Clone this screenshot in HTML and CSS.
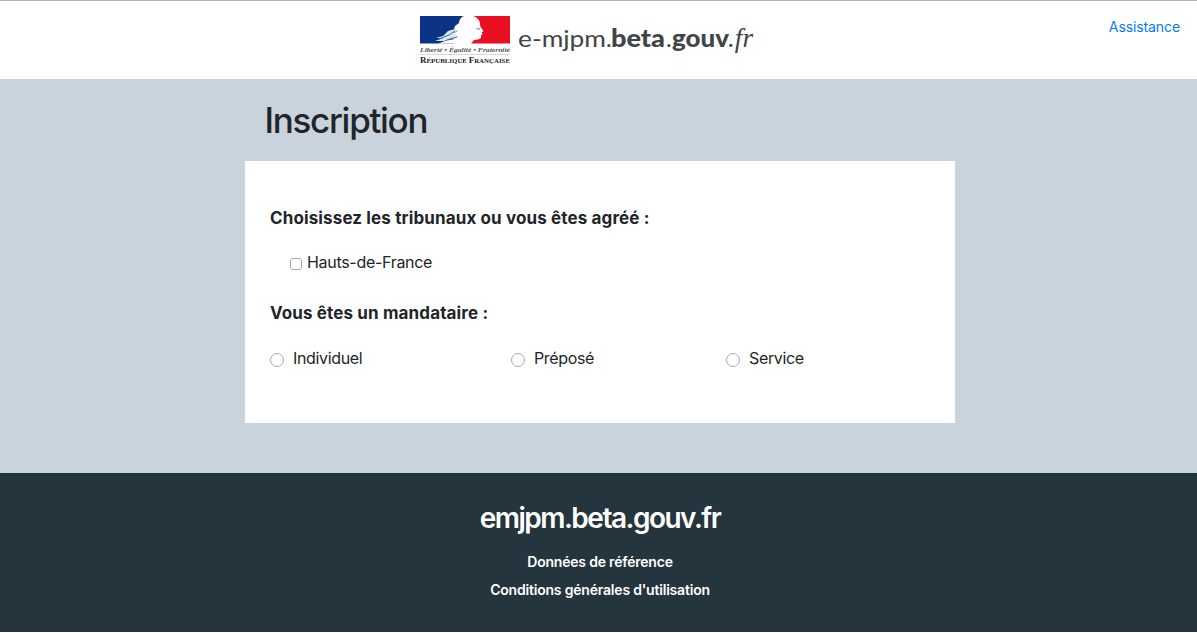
FILE: index.html
```html
<!DOCTYPE html>
<html lang="fr">
<head>
<meta charset="utf-8">
<title>e-mjpm</title>
<link rel="stylesheet" href="styles.css">
</head>
<body>
<header class="header">
  <svg class="logo" width="336" height="52" viewBox="0 0 336 52" role="img" aria-label="e-mjpm.beta.gouv.fr">
    <path d="M0 1H44C41 2 39 5 39 8L35 11L34 14L38 16L32 19L37 21L31 24L38 24L34 28.5H0Z" fill="#0b3486"/>
    <path d="M90 1H53C57 2 60 5 60 9L60.5 12L63.5 16L61.5 17.5L62.5 19L61 20.5L61 23L58 24.5L54 25L51 28.5H90Z" fill="#e90f22"/>
    <path d="M16 23L23 21L28 16L35 14L38 16L33 18L40 22L32 23L24 26H15L23 23Z" fill="#dfe7f2"/>
    <path d="M19 24L29 20L35 16M27 25L37 22" fill="none" stroke="#3e659f" stroke-width="1"/>
    <path d="M18 28.5L27 25.5L40 23L42 28.5Z" fill="#fff"/>
    <path d="M56.5 13.5L60 14.2" stroke="#777" stroke-width="1"/>
    <text class="motto" x="0" y="36.5" textLength="90" lengthAdjust="spacingAndGlyphs">Liberté • Égalité • Fraternité</text>
    <path d="M0 39.5H90" stroke="#bbb" stroke-width=".6"/>
    <text class="republic" x="0" y="47.5" textLength="90" lengthAdjust="spacingAndGlyphs"><tspan class="cap">R</tspan>ÉPUBLIQUE <tspan class="cap">F</tspan>RANÇAISE</text>
    <text class="brand" x="98" y="31.5" textLength="88" lengthAdjust="spacingAndGlyphs">e-mjpm</text>
    <text class="brand" x="186" y="31.5">.</text>
    <text class="brand brand-bold" x="191" y="31.5" textLength="54" lengthAdjust="spacingAndGlyphs">beta</text>
    <text class="brand" x="246" y="31.5">.</text>
    <text class="brand brand-bold" x="252" y="31.5" textLength="57" lengthAdjust="spacingAndGlyphs">gouv</text>
    <text class="brand brand-fr" x="308" y="31.5" textLength="25" lengthAdjust="spacingAndGlyphs">.fr</text>
  </svg>
  <a class="assistance" href="#">Assistance</a>
</header>
<main class="main">
  <div class="container">
    <h1 class="title">Inscription</h1>
    <form class="card">
      <h2 class="question question-courts">Choisissez les tribunaux ou vous êtes agréé :</h2>
      <label class="region"><input class="box" type="checkbox"><span>Hauts-de-France</span></label>
      <h2 class="question question-type">Vous êtes un mandataire :</h2>
      <div class="types">
        <label class="type"><input class="dot" type="radio" name="type"><span>Individuel</span></label>
        <label class="type"><input class="dot" type="radio" name="type"><span>Préposé</span></label>
        <label class="type"><input class="dot" type="radio" name="type"><span>Service</span></label>
      </div>
    </form>
  </div>
</main>
<footer class="footer">
  <div class="footer-title">emjpm.beta.gouv.fr</div>
  <a class="footer-link reference" href="#">Données de référence</a>
  <a class="footer-link terms" href="#">Conditions générales d'utilisation</a>
</footer>
</body>
</html>
```
FILE: styles.css
```css
* { box-sizing: border-box; }
body { margin: 0; background: #fff; color: #212529; font: 16px/24px Inter, "Liberation Sans", sans-serif; }
h1, h2 { margin: 0; }
a { text-decoration: none; }
.header { display: flex; justify-content: space-between; align-items: flex-start; height: 79px; border-top: 1px solid #b4b4b4; padding: 14px 17px 0 420px; }
.assistance { color: #007bff; font-size: 14px; line-height: 24px; letter-spacing: -.1px; }
.motto { font: italic 700 6px "Liberation Serif", serif; fill: #555; }
.republic { font: 700 6.5px "Liberation Serif", serif; fill: #222; }
.cap { font-size: 8.5px; }
.brand { font: 24px Lato, sans-serif; fill: #414548; }
.brand-bold { font-weight: 900; }
.brand-fr { font: italic 27px "Liberation Serif", serif; }
.main { height: 394px; background: #c9d3dc; }
.container { width: 710px; margin-left: 245px; }
.title { height: 82px; padding: 19px 0 0 19.5px; font-size: 35px; line-height: 44px; font-weight: 500; letter-spacing: -1.3px; }
.card { height: 262px; padding: 45px 25px 0; background: #fff; }
.question { font-size: 17px; line-height: 24px; font-weight: 700; letter-spacing: .13px; }
.region { display: flex; align-items: center; margin: 20px 0 0 20px; height: 24px; letter-spacing: -.3px; }
.region .box { margin: 3px 5px 0 0; }
.question-type { margin-top: 27px; }
.box, .dot { appearance: none; flex: none; background: #fff; border: 1px solid #a9a9a9; }
.box { width: 12px; height: 12px; border-radius: 3px; }
.dot { width: 14px; height: 14px; border-radius: 50%; margin: 3px 9px 0 0; }
.types { display: grid; grid-template-columns: 241px 215px 1fr; margin-top: 21px; letter-spacing: -.35px; }
.type { display: flex; align-items: center; height: 24px; }
.footer { display: flex; flex-direction: column; align-items: center; height: 159px; padding: 27px 0 0 3px; background: #25353d; color: #fff; }
.footer-title { font-size: 28px; line-height: 36px; font-weight: 600; letter-spacing: -1.5px; }
.footer-link { color: #fff; font-size: 14px; line-height: 28px; font-weight: 600; letter-spacing: -.2px; }
.reference { margin-top: 12px; }
```
